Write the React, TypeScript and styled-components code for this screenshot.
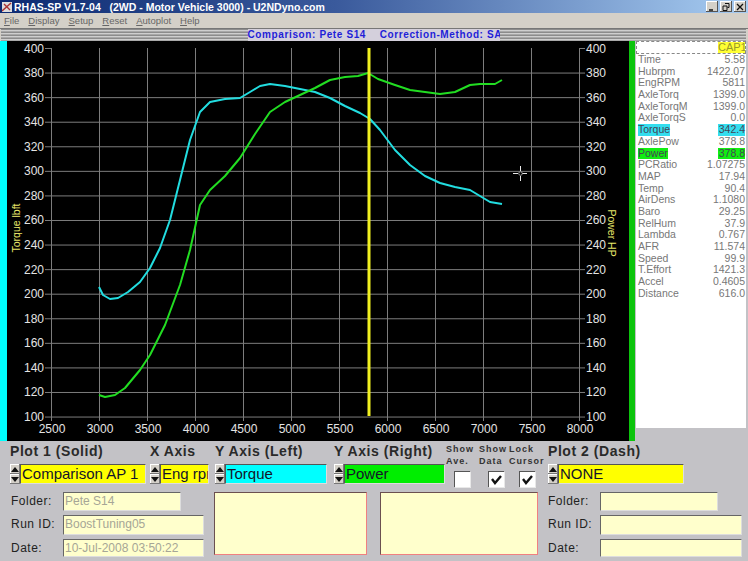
import React from "react";
import styled, { createGlobalStyle } from "styled-components";

const Global = createGlobalStyle`
  html, body { margin: 0; padding: 0; background: #c3c2c6; overflow: hidden; }
  * { box-sizing: border-box; }
  body { font-family: "Liberation Sans", Arial, sans-serif; }
`;

const Win = styled.div`
  width: 748px; height: 561px; display: flex; flex-direction: column; overflow: hidden; background: #c3c2c6;
`;
const TitleBar = styled.div`
  height: 13px; display: flex; align-items: center; padding: 0 2px 0 2px; gap: 2px;
  background: linear-gradient(90deg, #0c2a72 0%, #3a5a9c 45%, #a8cdf2 100%);
  color: #fff; font: bold 10.5px "Liberation Sans", sans-serif; white-space: pre;
`;
const TitleText = styled.span`flex: 1;`;
const WinButton = styled.div`
  width: 12px; height: 11px; background: #d4d0c8; margin-left: 0;
  box-shadow: inset -1px -1px 0 #555, inset 1px 1px 0 #fff;
  display: flex; align-items: center; justify-content: center;
`;
const MenuBar = styled.div`
  height: 15px; background: #d4d0c8; display: flex; align-items: center; gap: 9px; padding-left: 4px;
  font: 9.5px "Liberation Sans", sans-serif; color: #666;
  span::first-letter { text-decoration: underline; }
  span { display: inline-block; }
`;
const Strip = styled.div`
  height: 13px; display: flex; padding: 0 2px 0 1px;
  background: #d4d0c8; border-top: 1px solid #777;
`;
const Groove = styled.div`
  flex: 1; background: repeating-linear-gradient(180deg, #8c8c8c 0 1px, #cfcfcf 1px 2px, #a8a8a8 2px 3px);
`;
const StripTitle = styled.div`
  width: 252px; text-align: center; color: #1f1fd8; background: #d4d0dc; white-space: pre;
  font: bold 10px "Liberation Sans", sans-serif; letter-spacing: 0.62px; line-height: 12px;
`;
const Main = styled.div`
  height: 400px; display: flex; background: #c3c2c6;
`;
const CyanBar = styled.div`width: 7px; background: #00ffff;`;
const GreenBar = styled.div`width: 6px; background: #0cc40c;`;
const Chart = styled.svg`
  width: 622px; height: 400px; background: #000; display: block;
`;
const DataPanel = styled.div`
  width: 110px; height: 387px; margin-left: 1px; background: #fff; color: #777;
  font: 10.5px "Liberation Sans", sans-serif; display: flex; flex-direction: column;
`;
const CapRow = styled.div`
  height: 13px; border: 1px dashed #888; display: flex; justify-content: flex-end;
  margin-bottom: 0;
`;
const CapTag = styled.span`
  background: #ffff33; color: #99992a; width: 27px; text-align: center; line-height: 11px; font-size: 11px;
`;
const Rows = styled.div`padding-top: 0px; display: flex; flex-direction: column;`;
const Row = styled.div`
  height: 11.7px; display: flex; justify-content: space-between; padding: 0 1px 0 2px; line-height: 11.7px;
`;
const Cell = styled.span<{ $bg?: string }>`
  background: ${p => p.$bg || "transparent"};
  color: ${p => (p.$bg ? "#445" : "#777")};
`;
const ValueCell = styled(Cell)`
  min-width: ${p => (p.$bg ? "27px" : "0")}; text-align: right;
`;

const Controls = styled.div`flex: 1; background: #c3c2c6; color: #222;`;
const TopGrid = styled.div`
  display: grid; padding-left: 10px;
  grid-template-columns: 140px 65px 119px 112px 33px 30px 39px 1fr;
  grid-template-rows: 23px 28px;
`;
const Heading = styled.div`
  font: bold 14px "Liberation Sans", sans-serif; letter-spacing: 0.55px; color: #2a2a2a;
  padding-top: 2px; white-space: nowrap;
`;
const SmallHeading = styled.div`
  font: bold 9px/12px "Liberation Sans", sans-serif; letter-spacing: 1px; color: #333; white-space: nowrap; padding-top: 2px;
`;
const SpinField = styled.div`display: flex; height: 20px;`;
const Spinner = styled.div`
  width: 10px; height: 20px; display: flex; flex-direction: column; flex: none;
`;
const SpinButton = styled.div`
  height: 10px; background: #d4d0c8; box-shadow: inset -1px -1px 0 #777, inset 1px 1px 0 #fff;
  display: flex; align-items: center; justify-content: center;
`;
const Select = styled.div<{ $w: number; $bg: string }>`
  width: ${p => p.$w}px; height: 20px; background: ${p => p.$bg};
  border-top: 1px solid #555; border-left: 1px solid #555; border-right: 1px solid #ddd; border-bottom: 1px solid #ddd;
  font: 15px/18px "Liberation Sans", sans-serif; color: #14142a; padding-left: 1px; overflow: hidden; white-space: nowrap;
`;
const CheckBox = styled.div<{ $x: number }>`
  width: 16px; height: 16px; margin: 7px 0 0 ${p => p.$x}px; background: #fff;
  border-top: 1px solid #555; border-left: 1px solid #555; box-shadow: 1px 1px 0 #e8e8e8;
  display: flex; align-items: center; justify-content: center;
`;
const BottomGrid = styled.div`
  display: grid; padding-left: 11px; grid-template-columns: 203px 166px 168px 1fr;
`;
const Form = styled.div`display: flex; flex-direction: column;`;
const FormRow = styled.div<{ $h: number }>`
  height: ${p => p.$h}px; display: grid; grid-template-columns: 52px 1fr;
`;
const FormLabel = styled.div`
  font: 12px/18px "Liberation Sans", sans-serif; letter-spacing: 0.5px; color: #222;
`;
const Input = styled.div<{ $w: number; $h: number }>`
  width: ${p => p.$w}px; height: ${p => p.$h}px; background: #ffffcc;
  border-top: 1px solid #666; border-left: 1px solid #666; border-right: 1px solid #ddd; border-bottom: 1px solid #ddd;
  font: 12px/17px "Liberation Sans", sans-serif; color: #a6a696; padding-left: 1px; white-space: nowrap; overflow: hidden;
`;
const Note = styled.div<{ $w: number }>`
  width: ${p => p.$w}px; height: 63px; background: #ffffcc;
  border-top: 1px solid #6b5050; border-left: 1px solid #6b5050; border-right: 1px solid #f08080; border-bottom: 1px solid #f08080;
`;

const X = (v: number) => 51 + ((v - 2500) / 500) * 48;
const Y = (v: number) => 48 + ((400 - v) / 20) * 24.57;
const xTicks = Array.from({ length: 12 }, (_, i) => 2500 + i * 500);
const yTicks = Array.from({ length: 16 }, (_, i) => 400 - i * 20);

const cyan = "99,287 103,295 110,299 118,298 128,292 140,282 150,268 160,248 170,220 180,180 190,140 200,112 210,102 225,99 240,98 250,92 260,86 270,84 285,86 300,89 315,92 330,98 345,106 360,113 370,119 380,130 395,150 410,165 425,176 440,183 455,187 470,190 480,196 490,202 502,204";
const green = "99,395 105,397 115,395 125,388 140,370 150,355 165,325 180,285 190,250 200,205 210,190 225,176 240,158 255,134 270,112 285,102 300,95 315,88 330,80 345,77 358,76 368,73 378,79 395,85 410,90 425,92 440,94 455,92 470,85 480,84 495,84 502,80";

const data: [string, string, string?][] = [
  ["Time", "5.58"], ["Hubrpm", "1422.07"], ["EngRPM", "5811"], ["AxleTorq", "1399.0"], ["AxleTorqM", "1399.0"],
  ["AxleTorqS", "0.0"], ["Torque", "342.4", "#33ddee"], ["AxlePow", "378.8"], ["Power", "378.8", "#11ee11"],
  ["PCRatio", "1.07275"], ["MAP", "17.94"], ["Temp", "90.4"], ["AirDens", "1.1080"], ["Baro", "29.25"],
  ["RelHum", "37.9"], ["Lambda", "0.767"], ["AFR", "11.574"], ["Speed", "99.9"], ["T.Effort", "1421.3"],
  ["Accel", "0.4605"], ["Distance", "616.0"],
];

const Spin = () => (
  <Spinner>
    <SpinButton><svg width="8" height="5"><path d="M4 0 8 5H0Z" fill="#111" /></svg></SpinButton>
    <SpinButton><svg width="8" height="5"><path d="M0 0H8L4 5Z" fill="#111" /></svg></SpinButton>
  </Spinner>
);
const Tick = () => (
  <svg width="13" height="13" viewBox="0 0 13 13"><path d="M2 6 5 10 11 3" fill="none" stroke="#111" strokeWidth="2.4" /></svg>
);

export default function App() {
  return (
    <Win>
      <Global />
      <TitleBar>
        <svg width="10" height="10" viewBox="0 0 10 10">
          <rect width="10" height="10" fill="#ddd" />
          <path d="M0 9 9 1M2 2 8 8" stroke="#a33" strokeWidth="1.4" />
        </svg>
        <TitleText>RHAS-SP V1.7-04   (2WD - Motor Vehicle 3000) - U2NDyno.com</TitleText>
        <WinButton><svg width="8" height="8"><path d="M1 7H5" stroke="#111" strokeWidth="1.5" /></svg></WinButton>
        <WinButton><svg width="8" height="8"><path d="M3 .5H7V4.5H5.5M1 3H5V7.5H1Z" fill="none" stroke="#111" /></svg></WinButton>
        <WinButton><svg width="8" height="8"><path d="M1 1 7 7M7 1 1 7" stroke="#111" strokeWidth="1.3" /></svg></WinButton>
      </TitleBar>
      <MenuBar>
        <span>File</span><span>Display</span><span>Setup</span><span>Reset</span><span>Autoplot</span><span>Help</span>
      </MenuBar>
      <Strip>
        <Groove />
        <StripTitle>Comparison: Pete S14    Correction-Method: SAE</StripTitle>
        <Groove />
      </Strip>
      <Main>
        <CyanBar />
        <Chart viewBox="7 41 622 400">
          <g stroke="#7d7d7d" strokeWidth="1">
            {yTicks.slice(1).map(v => <line key={v} x1={45} x2={585} y1={Y(v) + 0.5} y2={Y(v) + 0.5} />)}
            <line x1={45} x2={51} y1={48.5} y2={48.5} />
            <line x1={579} x2={585} y1={48.5} y2={48.5} />
            {xTicks.map(v => <line key={v} x1={X(v) + 0.5} x2={X(v) + 0.5} y1={48} y2={421} />)}
          </g>
          <g fill="#e4e4e4" fontFamily="Liberation Sans" fontSize="12">
            {yTicks.map(v => <text key={v} x={44} y={Y(v) + 4.5} textAnchor="end">{v}</text>)}
            {yTicks.map(v => <text key={v} x={586} y={Y(v) + 4.5}>{v}</text>)}
            {xTicks.map(v => <text key={v} x={X(v) + 1} y={433} textAnchor="middle">{v}</text>)}
          </g>
          <g fill="#e8e86a" fontFamily="Liberation Sans" fontSize="10.5">
            <text transform="translate(20 228) rotate(-90)" textAnchor="middle">Torque lbft</text>
            <text transform="translate(608 233) rotate(90)" textAnchor="middle">Power HP</text>
          </g>
          <polyline points={cyan} fill="none" stroke="#22dde0" strokeWidth="2" strokeLinejoin="round" />
          <polyline points={green} fill="none" stroke="#22dd22" strokeWidth="2" strokeLinejoin="round" />
          <rect x={367.5} y={48} width={3} height={368} fill="#f0f020" />
          <g stroke="#e8e8e8" strokeWidth="1">
            <path d="M513 173.5H518M522 173.5H527M520.5 166V171M520.5 176V181" />
            <circle cx={520.5} cy={173.5} r={1.8} fill="none" stroke="#999" />
          </g>
        </Chart>
        <GreenBar />
        <DataPanel>
          <CapRow><CapTag>CAP1</CapTag></CapRow>
          <Rows>
            {data.map(([k, v, bg]) => (
              <Row key={k}>
                <Cell $bg={bg}>{k}</Cell>
                <ValueCell $bg={bg}>{v}</ValueCell>
              </Row>
            ))}
          </Rows>
        </DataPanel>
      </Main>
      <Controls>
        <TopGrid>
          <Heading>Plot 1 (Solid)</Heading>
          <Heading>X Axis</Heading>
          <Heading>Y Axis (Left)</Heading>
          <Heading>Y Axis (Right)</Heading>
          <SmallHeading>Show<br />Ave.</SmallHeading>
          <SmallHeading>Show<br />Data</SmallHeading>
          <SmallHeading>Lock<br />Cursor</SmallHeading>
          <Heading>Plot 2 (Dash)</Heading>
          <SpinField><Spin /><Select $w={126} $bg="#ffff00">Comparison AP 1</Select></SpinField>
          <SpinField><Spin /><Select $w={49} $bg="#ffff00">Eng rpm</Select></SpinField>
          <SpinField><Spin /><Select $w={102} $bg="#00ffff">Torque</Select></SpinField>
          <SpinField><Spin /><Select $w={101} $bg="#00ee00">Power</Select></SpinField>
          <CheckBox $x={8} />
          <CheckBox $x={9}><Tick /></CheckBox>
          <CheckBox $x={10}><Tick /></CheckBox>
          <SpinField><Spin /><Select $w={126} $bg="#ffff00">NONE</Select></SpinField>
        </TopGrid>
        <BottomGrid>
          <Form>
            <FormRow $h={23}><FormLabel>Folder:</FormLabel><Input $w={118} $h={19}>Pete S14</Input></FormRow>
            <FormRow $h={24}><FormLabel>Run ID:</FormLabel><Input $w={141} $h={20}>BoostTuning05</Input></FormRow>
            <FormRow $h={19}><FormLabel>Date:</FormLabel><Input $w={141} $h={18}>10-Jul-2008  03:50:22</Input></FormRow>
          </Form>
          <Note $w={153} />
          <Note $w={158} />
          <Form>
            <FormRow $h={23}><FormLabel>Folder:</FormLabel><Input $w={118} $h={19} /></FormRow>
            <FormRow $h={24}><FormLabel>Run ID:</FormLabel><Input $w={142} $h={20} /></FormRow>
            <FormRow $h={19}><FormLabel>Date:</FormLabel><Input $w={142} $h={18} /></FormRow>
          </Form>
        </BottomGrid>
      </Controls>
    </Win>
  );
}
